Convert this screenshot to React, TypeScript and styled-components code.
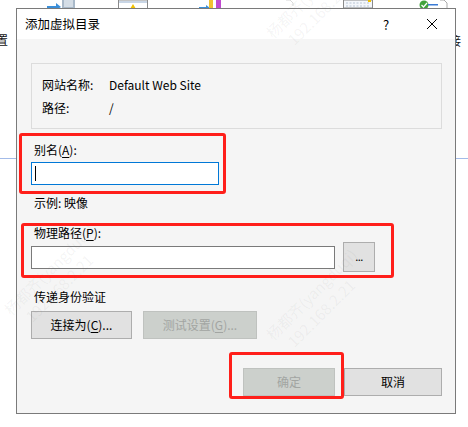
import React from 'react';
import styled, { createGlobalStyle } from 'styled-components';

const GlobalStyle = createGlobalStyle`
  html, body {
    margin: 0;
    padding: 0;
    background: #ffffff;
  }
  body {
    font-family: "Noto Sans CJK SC", "Noto Sans", sans-serif;
    font-size: 12px;
    color: #000;
  }
  * {
    box-sizing: border-box;
  }
`;

const Backdrop = styled.div`
  position: relative;
  width: 468px;
  height: 427px;
  overflow: hidden;
  padding: 8px 0 0 16px;
`;

const BackIcons = styled.svg`
  position: absolute;
  left: 0;
  top: 0;
`;

const BackChar = styled.span<{ $left: number; $top: number }>`
  position: absolute;
  left: ${p => p.$left}px;
  top: ${p => p.$top}px;
  font-size: 12px;
  line-height: 14px;
  color: #111;
`;

const BackLine = styled.div`
  position: absolute;
  left: 0;
  right: 0;
  top: 158px;
  height: 1px;
  background: #a3bbe8;
`;

const Watermark = styled.div<{ $left: number; $top: number }>`
  position: absolute;
  z-index: 2;
  left: ${p => p.$left}px;
  top: ${p => p.$top}px;
  transform: rotate(-45deg);
  transform-origin: left top;
  font-size: 15px;
  line-height: 20px;
  color: rgba(120, 120, 120, 0.08);
  white-space: nowrap;
  pointer-events: none;
`;

const Dialog = styled.div`
  position: relative;
  z-index: 1;
  width: 440px;
  height: 406px;
  border: 1px solid #7a7a7a;
  background: #f5f5f5;
  display: flex;
  flex-direction: column;
`;

const TitleBar = styled.div`
  height: 30px;
  background: #ffffff;
  display: flex;
  align-items: center;
  padding-left: 8px;
`;

const Title = styled.span`
  flex: 1;
  font-size: 12.5px;
  line-height: 16px;
`;

const TitleButton = styled.span<{ $width: number }>`
  width: ${p => p.$width}px;
  height: 30px;
  display: flex;
  align-items: center;
  justify-content: center;
  font-size: 13px;
`;

const Body = styled.div`
  padding: 24px 13px 0 14px;
  display: flex;
  flex-direction: column;
  align-items: flex-start;
`;

const GroupBox = styled.div`
  width: 411px;
  height: 66px;
  border: 1px solid #dcdcdc;
  padding: 9px 10px 0;
  display: grid;
  grid-template-columns: 67px 1fr;
  grid-auto-rows: 23px;
  align-items: center;
`;

const Text = styled.span`
  line-height: 16px;
`;

const Label = styled.div<{ $mt: number }>`
  margin: ${p => p.$mt}px 0 0 3px;
  line-height: 16px;
`;

const Key = styled.span`
  text-decoration: underline;
  text-underline-offset: 2px;
`;

const FieldWrap = styled.div<{ $mt: number }>`
  position: relative;
  margin-top: ${p => p.$mt}px;
`;

const TextBox = styled.input<{ $width: number; $focused?: boolean }>`
  display: block;
  width: ${p => p.$width}px;
  height: 23px;
  margin: 0;
  padding: 0 3px;
  border: 1px solid ${p => (p.$focused ? '#0078d7' : '#7a7a7a')};
  background: #ffffff;
  font: inherit;
  outline: none;
  caret-color: transparent;
`;

const Caret = styled.span`
  position: absolute;
  left: 4px;
  top: 4px;
  width: 1px;
  height: 15px;
  background: #000;
`;

const Row = styled.div<{ $mt: number; $gap: number }>`
  display: flex;
  align-items: center;
  gap: ${p => p.$gap}px;
  margin-top: ${p => p.$mt}px;
`;

const Button = styled.button<{ $width: number; $height?: number }>`
  width: ${p => p.$width}px;
  height: ${p => p.$height ?? 28}px;
  margin: 0;
  padding: 0;
  border: 1px solid #adadad;
  background: #e1e1e1;
  color: #000;
  font: inherit;
  font-size: 12px;
  line-height: 16px;
  &:disabled {
    background: #ccd0cc;
    border-color: #bfc2bf;
    color: #a2a5a2;
  }
`;

const Dots = styled.span`
  font-size: 11px;
  letter-spacing: -0.5px;
  position: relative;
  top: -1px;
`;

const Footer = styled.div`
  margin-top: auto;
  display: flex;
  justify-content: flex-end;
  gap: 9px;
  padding: 0 13px 17px 0;
`;

const Highlight = styled.div<{ $left: number; $top: number; $w: number; $h: number }>`
  position: absolute;
  left: ${p => p.$left}px;
  top: ${p => p.$top}px;
  width: ${p => p.$w}px;
  height: ${p => p.$h}px;
  border: 3px solid #ff1f1a;
  border-radius: 3px;
  pointer-events: none;
`;

function CloseIcon() {
  return (
    <svg width="12" height="12" viewBox="0 0 12 12">
      <path d="M1 1 L11 11 M11 1 L1 11" stroke="#000" strokeWidth="1" fill="none" />
    </svg>
  );
}

function TopIcons() {
  return (
    <BackIcons width="468" height="10" viewBox="0 0 468 10">
      {/* server arrow */}
      <path d="M47 6 L56 6 L56 3 L61 7 L56 10 L47 10 Z" fill="#3b8fd9" />
      <rect x="62" y="0" width="13" height="9" fill="#a9b9c9" />
      <rect x="64" y="0" width="9" height="7" fill="#d4dde6" />
      {/* window with warning */}
      <rect x="118.5" y="0" width="29" height="9" fill="#ffffff" stroke="#8a8a8a" />
      <rect x="119" y="1" width="28" height="2" fill="#c9d6e6" />
      <path d="M133 4 L136 9 L130 9 Z" fill="#f2c200" />
      {/* arrow with bars */}
      <path d="M199 7 L206 7 L206 5 L210 8 L206 10 L199 10 Z" fill="#3b8fd9" />
      <rect x="209" y="0" width="4" height="9" fill="#f1c232" />
      <rect x="216" y="0" width="5" height="9" fill="#c04ad0" />
      {/* faint page */}
      <path d="M286 0 L290 0 L293 3 L293 6" stroke="#d8d8d8" fill="none" />
      {/* list window */}
      <rect x="343.5" y="0" width="29" height="8" fill="#f4f7fb" stroke="#8a8a8a" />
      <path d="M346 3 H370 M346 6 H370" stroke="#b8c4d4" strokeDasharray="2 1.5" />
      <rect x="368" y="0" width="3" height="2" fill="#f0c000" />
      {/* check page */}
      <circle cx="424" cy="5" r="4.5" fill="#41a33c" />
      <path d="M421.5 5 L423.5 7 L427 3" stroke="#fff" strokeWidth="1.2" fill="none" />
      <rect x="428" y="4" width="10" height="1.5" fill="#3a7bd5" />
      <path d="M440 0 L444 0 L447 3 L447 9" stroke="#aaaaaa" fill="none" />
    </BackIcons>
  );
}

const marks = [
  { left: 0, top: 305 },
  { left: 262, top: 330 },
  { left: 262, top: 28 },
];

export default function App() {
  return (
    <>
      <GlobalStyle />
      <Backdrop>
        <TopIcons />
        <BackChar $left={-4} $top={33}>置</BackChar>
        <BackChar $left={449} $top={34}>接</BackChar>
        <BackLine />

        <Dialog>
          <TitleBar>
            <Title>添加虚拟目录</Title>
            <TitleButton $width={46}>?</TitleButton>
            <TitleButton $width={46}>
              <CloseIcon />
            </TitleButton>
          </TitleBar>

          <Body>
            <GroupBox>
              <Text>网站名称:</Text>
              <Text>Default Web Site</Text>
              <Text>路径:</Text>
              <Text>/</Text>
            </GroupBox>

            <Label $mt={13}>
              别名(<Key>A</Key>):
            </Label>
            <FieldWrap $mt={4}>
              <TextBox $width={188} $focused readOnly value="" />
              <Caret />
            </FieldWrap>

            <Label $mt={10}>示例: 映像</Label>

            <Label $mt={14}>
              物理路径(<Key>P</Key>):
            </Label>
            <Row $mt={1} $gap={8}>
              <TextBox $width={304} readOnly value="" />
              <Button $width={32} $height={30}>
                <Dots>...</Dots>
              </Button>
            </Row>

            <Label $mt={17}>传递身份验证</Label>
            <Row $mt={6} $gap={11}>
              <Button $width={101}>
                连接为(<Key>C</Key>)...
              </Button>
              <Button $width={114} disabled>
                测试设置(<Key>G</Key>)...
              </Button>
            </Row>
          </Body>

          <Footer>
            <Button $width={92} disabled>
              确定
            </Button>
            <Button $width={98}>取消</Button>
          </Footer>

          <Highlight $left={2} $top={124} $w={207} $h={61} />
          <Highlight $left={4} $top={214} $w={373} $h={55} />
          <Highlight $left={212} $top={343} $w={115} $h={47} />
        </Dialog>

        {marks.map(m => (
          <Watermark key={`${m.left}-${m.top}`} $left={m.left} $top={m.top}>
            杨都齐(yangduqi)
            <br />
            &nbsp;&nbsp;&nbsp;192.168.2.21
          </Watermark>
        ))}
      </Backdrop>
    </>
  );
}
